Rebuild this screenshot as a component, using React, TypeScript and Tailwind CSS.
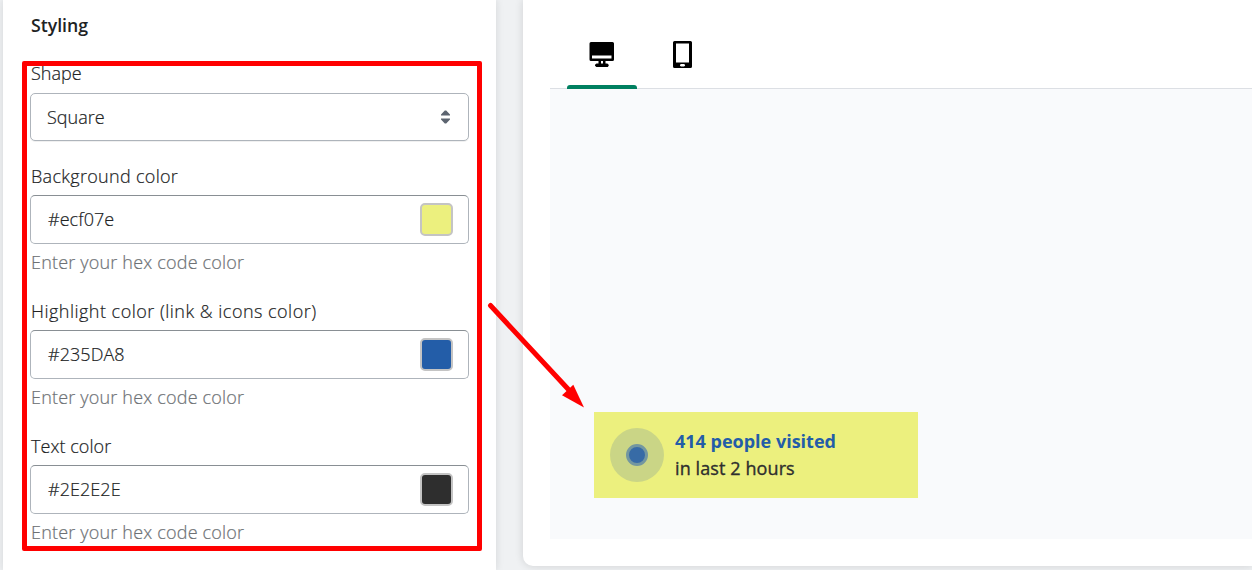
import React from "react";

type ColorFieldProps = {
  label: string;
  labelClass: string;
  value: string;
  swatch: string;
};

function ColorField({ label, labelClass, value, swatch }: ColorFieldProps) {
  return (
    <div className="mt-[22px]">
      <label className={`block h-[27px] pl-px leading-[26px] ${labelClass}`}>{label}</label>
      <div className="mt-[5px] flex h-[49px] items-center justify-between rounded-[5px] border border-[#aeb4bb] border-t-[#898f94] bg-white pr-[15px] pl-[17px]">
        <span className="tracking-[0.05px] text-[#202223]">{value}</span>
        <span className={`h-[33px] w-[33px] rounded-[5px] border-2 border-[#c4c4c4] ${swatch}`} />
      </div>
      <p className="mt-[5px] h-[27px] pl-px leading-[26px] tracking-[0.19px] text-[#6d7175]">Enter your hex code color</p>
    </div>
  );
}

function DesktopIcon() {
  return (
    <svg width="26" height="28" viewBox="0 0 26 28" className="block">
      <path fillRule="evenodd" d="M2 2h21.500A1.500 1.500 0 0 1 25 3.500V19.500A1.500 1.500 0 0 1 23.500 21h-7v2.500h1.800l1.400 1.200v1L18.800 27H7.300L6 25.700v-1L7.500 23.500h2V21H2A1.500 1.500 0 0 1 .5 19.500V3.500A1.500 1.500 0 0 1 2 2ZM3 15.500v3h19.500v-3ZM12 21v2.500h2V21Z" />
    </svg>
  );
}

function PhoneIcon() {
  return (
    <svg width="19" height="27" viewBox="0 0 19 27" className="block">
      <path fillRule="evenodd" d="M1.500 0h16A1.500 1.500 0 0 1 19 1.500v24a1.500 1.500 0 0 1-1.500 1.500h-16A1.500 1.500 0 0 1 0 25.500v-24A1.500 1.500 0 0 1 1.500 0ZM3 2.500v19h13v-19ZM8 23l-1 .7v1l1 .8h3l1-.8v-1l-1-.7Z" />
    </svg>
  );
}

export default function App() {
  return (
    <div className="relative flex h-[570px] w-full overflow-hidden bg-[#eff1f3] pl-[3px] font-['Open_Sans','Noto_Sans',sans-serif] text-[18px] font-light text-[#202223] [-webkit-text-stroke:0.2px]">
      <section className="h-[570px] w-[493px] shrink-0 bg-white pt-[12px] pr-[27px] pl-[27px] shadow-[0_0_8px_rgba(23,24,24,0.12)]">
        <h2 className="h-[27px] pl-px text-[17.7px] leading-[26px] font-semibold [-webkit-text-stroke:0px]">Styling</h2>
        <label className="mt-[21px] block h-[27px] pl-px leading-[26px]">Shape</label>
        <div className="mt-[6px] flex h-[48px] items-center justify-between rounded-[5px] border border-[#aeb4bb] bg-white pr-[18px] pl-[16px] shadow-[0_1px_0_rgba(0,0,0,0.06)]">
          <span>Square</span>
          <svg width="9" height="15" viewBox="0 0 9 15" fill="#5c6470">
            <path d="M0 5.500V4.500L3.800.5h1.400L9 4.500v1ZM0 8.500h9v1L5.200 13.500H3.800L0 9.500Z" />
          </svg>
        </div>
        <ColorField label="Background color" labelClass="tracking-[0.3px]" value="#ecf07e" swatch="bg-[#ecf07e]" />
        <ColorField label="Highlight color (link & icons color)" labelClass="tracking-[0.48px]" value="#235DA8" swatch="bg-[#235da8]" />
        <ColorField label="Text color" labelClass="tracking-[0.05px]" value="#2E2E2E" swatch="bg-[#2e2e2e]" />
      </section>

      <section className="ml-[27px] h-[566px] min-w-0 flex-1 rounded-bl-[10px] bg-white pl-[27px] shadow-[0_0_8px_rgba(23,24,24,0.14)]">
        <nav className="flex h-[89px] items-end border-b border-[#dcdfe4] pl-[17px]">
          <div className="-mb-px flex h-[49px] w-[70px] flex-col items-center justify-between">
            <DesktopIcon />
            <span className="h-[4px] w-full rounded-t-[3px] bg-[#008060]" />
          </div>
          <div className="-mb-px ml-[36px] h-[49px] pt-px">
            <PhoneIcon />
          </div>
        </nav>
        <div className="h-[450px] bg-[#f9fafc] pt-[323px] pl-[44px]">
          <div className="flex h-[86px] w-[324px] items-center bg-[#ecf07e] pl-[16px]">
            <div className="flex h-[54px] w-[54px] items-center justify-center rounded-full bg-[#cad586]">
              <span className="h-[22px] w-[22px] rounded-full border-[3px] border-[#7397a0] bg-[#376ba6]" />
            </div>
            <div className="ml-[11px] leading-[27px]">
              <p className="font-bold text-[#235da8] [-webkit-text-stroke:0px]">414 people visited</p>
              <p className="font-normal tracking-[0.1px] text-[#2e2e2e] [-webkit-text-stroke:0.35px]">in last 2 hours</p>
            </div>
          </div>
        </div>
      </section>

      <div className="pointer-events-none absolute top-[61px] left-[22px] h-[490px] w-[460px] rounded-[2px] border-[5px] border-[#ff0000]" />
      <svg className="pointer-events-none absolute top-[290px] left-[480px]" width="120" height="130" viewBox="480 290 120 130">
        <path d="M490.500 305.500 568 389" stroke="#ff0000" strokeWidth="5" strokeLinecap="round" />
        <path d="M584 407.500 573.300 384.700 562 395.200Z" fill="#ff0000" />
      </svg>
    </div>
  );
}
